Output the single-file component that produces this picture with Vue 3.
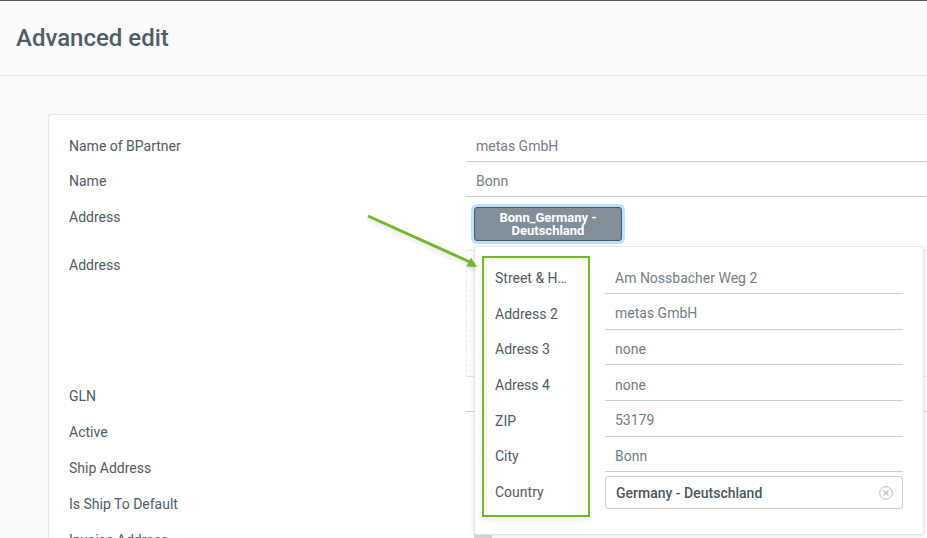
<script setup>
import { reactive } from 'vue'

const partner = reactive({ name: 'metas GmbH', location: 'Bonn', gln: '', country: 'Germany - Deutschland' })

const flags = [
  { id: 'active', label: 'Active' },
  { id: 'ship', label: 'Ship Address' },
  { id: 'ship-default', label: 'Is Ship To Default' },
  { id: 'invoice', label: 'Invoice Address' },
]

const address = reactive([
  { id: 'street', label: 'Street & House No.', value: 'Am Nossbacher Weg 2' },
  { id: 'address2', label: 'Address 2', value: 'metas GmbH' },
  { id: 'address3', label: 'Adress 3', value: 'none' },
  { id: 'address4', label: 'Adress 4', value: 'none' },
  { id: 'zip', label: 'ZIP', value: '53179' },
  { id: 'city', label: 'City', value: 'Bonn' },
])
</script>

<template>
  <div class="modal">
    <header class="modal-header">
      <h1>Advanced edit</h1>
    </header>
    <main class="modal-body">
      <form class="panel" @submit.prevent>
        <div class="row">
          <label for="partner-name">Name of BPartner</label>
          <input id="partner-name" v-model="partner.name" class="line-input" type="text">
        </div>
        <div class="row">
          <label for="location-name">Name</label>
          <input id="location-name" v-model="partner.location" class="line-input" type="text">
        </div>
        <div class="row row-address">
          <label for="address-button">Address</label>
          <div class="address-cell">
            <button id="address-button" class="address-button" type="button">Bonn_Germany - Deutschland</button>
            <div class="dropdown">
              <div class="address-grid">
                <div v-for="field in address" :key="field.id" class="address-row">
                  <label :for="field.id">{{ field.label }}</label>
                  <input :id="field.id" v-model="field.value" class="line-input" type="text">
                </div>
                <div class="address-row">
                  <label for="country">Country</label>
                  <div class="lookup">
                    <input id="country" v-model="partner.country" type="text">
                    <button type="button" aria-label="Clear" @click="partner.country = ''">
                      <svg width="14" height="14" viewBox="0 0 14 14" fill="none" stroke="#aebfca">
                        <circle cx="7" cy="7" r="6.3" />
                        <path d="M4.5 4.5l5 5M9.5 4.5l-5 5" stroke-width="1.2" />
                      </svg>
                    </button>
                  </div>
                </div>
              </div>
              <div class="highlight"></div>
              <svg class="arrow" width="120" height="64" viewBox="0 0 120 64">
                <path d="M6 6L108 52" stroke="#73b82a" stroke-width="3" />
                <path d="M115 57L104.500 56.500L109 47.500Z" fill="#73b82a" />
              </svg>
            </div>
          </div>
        </div>
        <div class="row">
          <label for="address-text">Address</label>
          <textarea id="address-text" class="address-text" readonly></textarea>
        </div>
        <div class="row">
          <label for="gln">GLN</label>
          <input id="gln" v-model="partner.gln" class="line-input" type="text">
        </div>
        <div v-for="flag in flags" :key="flag.id" class="row row-flag">
          <label :for="flag.id">{{ flag.label }}</label>
          <input :id="flag.id" class="flag" type="checkbox">
        </div>
      </form>
    </main>
  </div>
</template>

<style>
body {
  margin: 0;
}
</style>

<style scoped>
* {
  box-sizing: border-box;
}

.modal {
  height: 100vh;
  overflow: hidden;
  border-top: 1px solid #56595e;
  background: #f9fafc;
  color: #4f5c66;
  font: 14px/20px Roboto, "Liberation Sans", sans-serif;
}

input,
button,
textarea {
  font: inherit;
  margin: 0;
  border-radius: 0;
  outline: none;
}

.modal-header {
  padding: 20px 16px;
  border-bottom: 1px solid #dfe5ea;
}

h1 {
  margin: 0;
  font-size: 24px;
  line-height: 34px;
  font-weight: 500;
}

.modal-body {
  padding: 38px 0 0 48px;
}

.panel {
  padding: 12px 0 12px 20px;
  background: #fff;
  border: 1px solid #dfe6ec;
  border-right: 0;
  border-radius: 3px 0 0 0;
}

.row {
  display: grid;
  grid-template-columns: 397px 1fr;
  align-items: start;
}

.row > label {
  padding-top: 9px;
}

.line-input {
  width: 100%;
  min-width: 0;
  height: 35px;
  padding: 3px 10px 0;
  border: 0;
  border-bottom: 1px solid #c4d2db;
  background: transparent;
  color: #737f88;
}

.row-address {
  height: 49px;
}

.row-address > label {
  padding-top: 10px;
}

.address-cell {
  position: relative;
  height: 49px;
  padding: 10px 8px 0;
}

.address-button {
  width: 148px;
  height: 34px;
  padding: 0 20px;
  border: 1px solid #4b5a66;
  border-radius: 3px;
  background: #808f99;
  box-shadow: 0 0 0 3px #bfdfff;
  color: #fff;
  font-size: 13px;
  line-height: 13px;
  font-weight: 700;
}

.dropdown {
  position: absolute;
  z-index: 1;
  top: 49px;
  left: 8px;
  right: 3px;
  padding: 12px 20px 25px;
  border: 1px solid #dfe6ec;
  border-radius: 3px;
  background: #fff;
  box-shadow: 0 2px 6px rgba(60, 70, 80, 0.12);
}

.address-grid {
  display: grid;
  grid-template-rows: repeat(7, 1fr);
  height: 250px;
}

.address-row {
  display: grid;
  grid-template-columns: 72px 1fr;
  column-gap: 38px;
  align-items: start;
}

.address-row label {
  padding-top: 9px;
  overflow: hidden;
  text-overflow: ellipsis;
  white-space: nowrap;
}

.lookup {
  display: flex;
  align-items: center;
  height: 33px;
  margin-top: 3px;
  padding: 0 9px 0 10px;
  border: 1px solid #c4d2db;
  border-radius: 3px;
}

.lookup input {
  flex: 1;
  min-width: 0;
  padding: 0;
  border: 0;
  background: transparent;
  color: #4b5761;
  font-weight: 500;
}

.lookup button {
  display: flex;
  padding: 0;
  border: 0;
  background: transparent;
}

.highlight {
  position: absolute;
  top: 9px;
  left: 7px;
  width: 108px;
  height: 261px;
  border: 2px solid #73b82a;
  box-shadow: 0 4px 5px rgba(60, 70, 80, 0.08), inset 0 4px 5px rgba(60, 70, 80, 0.06);
  pointer-events: none;
}

.arrow {
  position: absolute;
  top: -37px;
  left: -113px;
  filter: drop-shadow(0 3px 2px rgba(60, 70, 80, 0.15));
  pointer-events: none;
}

.address-text {
  height: 127px;
  margin-top: 4px;
  border: 1px solid #dfe6ec;
  border-right: 0;
  border-left-style: dashed;
  background: #fff;
  resize: none;
}

.row-flag {
  height: 36px;
}

.row-flag > label {
  padding-top: 10px;
}

.flag {
  appearance: none;
  width: 18px;
  height: 16px;
  margin: 12px 8px;
  background: #d8dad8;
}
</style>
